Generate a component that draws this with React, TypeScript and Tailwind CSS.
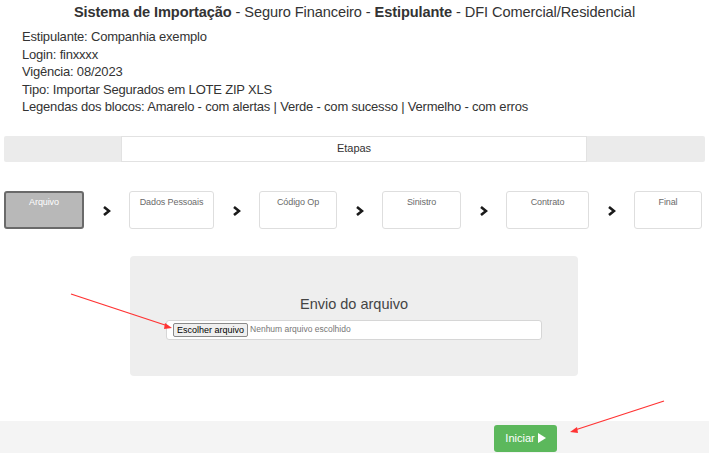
import React from "react";

function Chevron() {
  return (
    <svg width="8" height="10" viewBox="0 0 8 10" className="block">
      <path d="M1 1 L6 5 L1 9" stroke="#1a1a1a" strokeWidth="2.6" fill="none" strokeLinejoin="miter" />
    </svg>
  );
}

const steps = [
  { label: "Arquivo", w: "w-[80px]", active: true },
  { label: "Dados Pessoais", w: "w-[85px]" },
  { label: "Código Op", w: "w-[78px]" },
  { label: "Sinistro", w: "w-[79px]" },
  { label: "Contrato", w: "w-[83px]" },
  { label: "Final", w: "w-[68px]" },
];

export default function App() {
  return (
    <div
      className="relative w-[709px] h-[457px] bg-white text-[#333] overflow-hidden"
      style={{ fontFamily: '"Liberation Sans", Arial, sans-serif' }}
    >
      <div className="text-center text-[14.6px] leading-[18px] pt-[3px] tracking-[-0.1px]">
        <b>Sistema de Importação</b> - Seguro Financeiro - <b>Estipulante</b> - DFI Comercial/Residencial
      </div>
      <div className="pl-[22px] pt-[7px] text-[13px] leading-[17.5px] tracking-[-0.2px]">
        <div>Estipulante: Companhia exemplo</div>
        <div>Login: finxxxx</div>
        <div>Vigência: 08/2023</div>
        <div>Tipo: Importar Segurados em LOTE ZIP XLS</div>
        <div>Legendas dos blocos: Amarelo - com alertas | Verde - com sucesso | Vermelho - com erros</div>
      </div>

      <div className="mt-[20px] mx-[4px] flex h-[26px]">
        <div className="w-[117px] bg-[#ebebeb] rounded-l-[2px]" />
        <div className="flex-1 border border-[#e2e2e2] bg-white flex items-center justify-center text-[11px]">
          Etapas
        </div>
        <div className="w-[118px] bg-[#ebebeb] rounded-r-[2px]" />
      </div>

      <div className="mt-[29px] pl-[4px] flex items-start">
        {steps.map((s, i) => (
          <React.Fragment key={s.label}>
            <div
              className={
                s.active
                  ? `${s.w} h-[38px] rounded-[3px] border-2 border-[#6a6a6a] bg-[#b8b8b8] text-white text-[9px] text-center pt-[3px] tracking-[-0.1px]`
                  : `${s.w} h-[38px] rounded-[3px] border border-[#dedede] bg-white text-[#6a6a6a] text-[9px] text-center pt-[4px] tracking-[-0.1px]`
              }
            >
              {s.label}
            </div>
            {i < steps.length - 1 && (
              <div className="w-[45px] h-[38px] flex items-center justify-center pt-[3px]">
                <Chevron />
              </div>
            )}
          </React.Fragment>
        ))}
      </div>

      <div className="mt-[27px] ml-[130px] w-[448px] h-[120px] bg-[#eeeeee] rounded-[4px] flex flex-col items-center">
        <div className="mt-[39px] text-[14.5px] leading-[18px] text-[#444]">Envio do arquivo</div>
        <div className="mt-[7px] w-[376px] h-[20px] bg-white border border-[#d6d6d6] rounded-[3px] flex items-center pl-[6px]">
          <div className="h-[14px] px-[3px] border border-[#8a8a8a] bg-[#efefef] rounded-[2px] text-[9px] leading-[12px] text-black">
            Escolher arquivo
          </div>
          <div className="ml-[2px] text-[8.5px] text-[#777]">Nenhum arquivo escolhido</div>
        </div>
      </div>

      <div className="mt-[45px] h-[32px] bg-[#f4f4f4] flex items-start pl-[494px] pt-[4px]">
        <div className="w-[63px] h-[27px] bg-[#5cb85c] rounded-[3px] flex items-center justify-center gap-[3px] text-white text-[11px]">
          <span>Iniciar</span>
          <svg width="8" height="10" viewBox="0 0 8 10">
            <path d="M0 0 L8 5 L0 10 Z" fill="white" />
          </svg>
        </div>
      </div>

      <svg className="absolute inset-0 pointer-events-none" width="709" height="457">
        <line x1="71" y1="294" x2="168" y2="326" stroke="#f33" strokeWidth="1.3" />
        <path d="M172 328 L165 323 L164 329 Z" fill="#f33" />
        <line x1="664" y1="401" x2="575" y2="430" stroke="#f33" strokeWidth="1.3" />
        <path d="M570 432 L577 427 L578 433 Z" fill="#f33" />
      </svg>
    </div>
  );
}
